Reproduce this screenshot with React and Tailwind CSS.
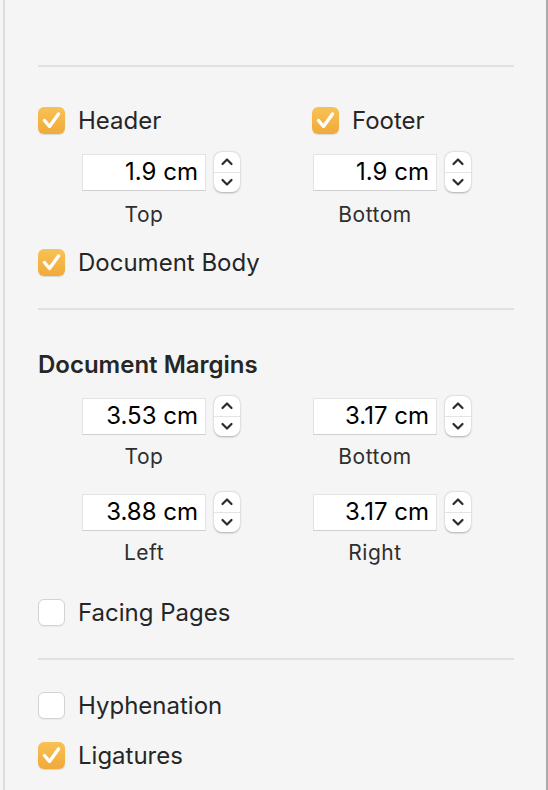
import React from "react";

const font = { fontFamily: "Inter, 'Noto Sans', sans-serif" };

function CheckBox({ checked }) {
  if (checked) {
    return (
      <div className="w-[27px] h-[27px] rounded-[6px] bg-gradient-to-b from-[#f8c254] to-[#f1a93a] shadow-[0_1px_1px_rgba(0,0,0,0.12)] flex items-center justify-center shrink-0">
        <svg width="27" height="27" viewBox="0 0 27 27">
          <path d="M6.5 13.5 L11.5 19.5 L20.5 7" fill="none" stroke="white" strokeWidth="3.4" strokeLinecap="round" strokeLinejoin="round" />
        </svg>
      </div>
    );
  }
  return (
    <div className="w-[27px] h-[27px] rounded-[6px] bg-white border border-[#d3d3d3] shadow-[0_1px_1px_rgba(0,0,0,0.05)] shrink-0" />
  );
}

function CheckRow({ checked, label }) {
  return (
    <div className="flex items-center h-[27px] gap-[13px]">
      <CheckBox checked={checked} />
      <span className="text-[24px] leading-none text-[#262626]">{label}</span>
    </div>
  );
}

function Stepper() {
  return (
    <div className="w-[26px] h-[40px] rounded-[8px] bg-white shadow-[0_0.5px_2px_rgba(0,0,0,0.3)] flex flex-col items-center">
      <div className="flex-1 flex items-center justify-center">
        <svg width="14" height="10" viewBox="0 0 14 10">
          <path d="M2.5 7 L7 2.5 L11.5 7" fill="none" stroke="#2b2b2b" strokeWidth="2.2" strokeLinecap="round" strokeLinejoin="round" />
        </svg>
      </div>
      <div className="w-full h-px bg-[#e4e4e4]" />
      <div className="flex-1 flex items-center justify-center">
        <svg width="14" height="10" viewBox="0 0 14 10">
          <path d="M2.5 3 L7 7.5 L11.5 3" fill="none" stroke="#2b2b2b" strokeWidth="2.2" strokeLinecap="round" strokeLinejoin="round" />
        </svg>
      </div>
    </div>
  );
}

function Field({ value }) {
  return (
    <div className="flex items-center h-[40px] gap-[8px]">
      <div className="w-[124px] h-[37px] bg-white border border-[#e3e3e3] border-b-[#cfcfcf] flex items-center justify-end pr-[7px]">
        <span className="text-[24px] leading-none text-black">{value}</span>
      </div>
      <Stepper />
    </div>
  );
}

function Label({ text }) {
  return (
    <div className="w-[124px] h-[24px] flex items-center justify-center text-[21px] tracking-[0.5px] leading-none text-[#2e2e2e]">
      {text}
    </div>
  );
}

function Divider({ className }) {
  return <div className={"h-[2px] bg-[#e1e1e1] " + className} />;
}

export default function App() {
  return (
    <div style={font} className="w-[548px] h-[790px] bg-[#f5f5f5] pl-[3px] overflow-hidden">
      <div className="h-full border-l-2 border-[#dcdcdc] border-r-2 border-r-[#aaaaaa] pl-[33px] pr-[32px] flex flex-col">
        <Divider className="mt-[65px]" />

        <div className="mt-[40px] grid grid-cols-[274px_1fr]">
          <CheckRow checked label="Header" />
          <CheckRow checked label="Footer" />
        </div>

        <div className="mt-[18px] grid grid-cols-[274px_1fr]">
          <div className="pl-[44px]"><Field value="1.9 cm" /></div>
          <div className="pl-px"><Field value="1.9 cm" /></div>
        </div>
        <div className="mt-[10px] grid grid-cols-[274px_1fr]">
          <div className="pl-[44px]"><Label text="Top" /></div>
          <div className="pl-px"><Label text="Bottom" /></div>
        </div>

        <div className="mt-[23px]">
          <CheckRow checked label="Document Body" />
        </div>

        <Divider className="mt-[32px]" />

        <div className="mt-[41px] h-[28px] flex items-center text-[24px] leading-none font-semibold text-[#262626]">
          Document Margins
        </div>

        <div className="mt-[17px] grid grid-cols-[274px_1fr]">
          <div className="pl-[44px]"><Field value="3.53 cm" /></div>
          <div className="pl-px"><Field value="3.17 cm" /></div>
        </div>
        <div className="mt-[8px] grid grid-cols-[274px_1fr]">
          <div className="pl-[44px]"><Label text="Top" /></div>
          <div className="pl-px"><Label text="Bottom" /></div>
        </div>

        <div className="mt-[24px] grid grid-cols-[274px_1fr]">
          <div className="pl-[44px]"><Field value="3.88 cm" /></div>
          <div className="pl-px"><Field value="3.17 cm" /></div>
        </div>
        <div className="mt-[8px] grid grid-cols-[274px_1fr]">
          <div className="pl-[44px]"><Label text="Left" /></div>
          <div className="pl-px"><Label text="Right" /></div>
        </div>

        <div className="mt-[35px]">
          <CheckRow checked={false} label="Facing Pages" />
        </div>

        <Divider className="mt-[32px]" />

        <div className="mt-[32px]">
          <CheckRow checked={false} label="Hyphenation" />
        </div>
        <div className="mt-[23px]">
          <CheckRow checked label="Ligatures" />
        </div>
      </div>
    </div>
  );
}
